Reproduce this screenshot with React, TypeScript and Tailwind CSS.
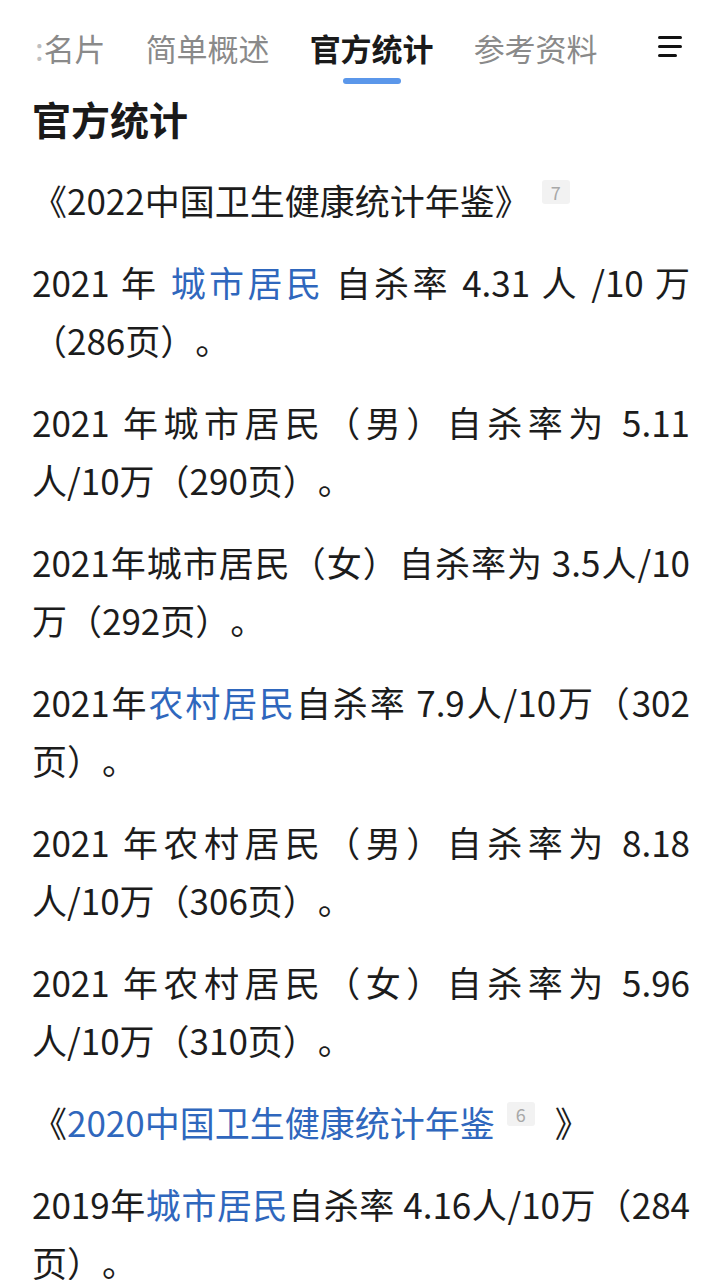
import { useState } from 'react';

const tabs = ['名片', '简单概述', '官方统计', '参考资料'];

function Link({ children }: { children: React.ReactNode }) {
  return <span className="text-[#2f67bd]">{children}</span>;
}

function Ref({ n }: { n: string }) {
  return (
    <sup className="ml-3 inline-flex h-[24px] w-[28px] items-center justify-center rounded-[3px] bg-[#f2f2f2] align-[6px] text-[18px] leading-none text-[#a8a8a8]">
      {n}
    </sup>
  );
}

// keeps a unit like "人/10万" from splitting where the reference does not
function Nw({ children }: { children: React.ReactNode }) {
  return <span className="whitespace-nowrap">{children}</span>;
}

export default function App() {
  const [active, setActive] = useState('官方统计');

  return (
    <div
      className="min-h-[1280px] w-[720px] overflow-hidden bg-white text-[#1c1c1c]"
      style={{ fontFamily: '"Noto Sans CJK SC", "Noto Sans", sans-serif' }}
    >
      {/* Tabs */}
      <div className="relative flex h-[89px] items-start">
        <div className="flex flex-1 items-start gap-[40px] overflow-hidden pl-[47px] pt-[28px]">
          {tabs.map((t, i) => (
            <button
              key={t}
              onClick={() => setActive(t)}
              className={`relative flex shrink-0 flex-col items-center text-[31px] leading-[40px] ${
                active === t ? 'font-bold text-[#1a1a1a]' : 'text-[#8a8a8a]'
              } ${i === 0 ? '-ml-[12px]' : ''}`}
            >
              {i === 0 ? (
                <span className="relative">
                  <span className="text-[#b5b5b5]">:</span>
                  {t}
                </span>
              ) : (
                t
              )}
              {active === t && <span className="mt-[10px] h-[6px] w-[58px] rounded-full bg-[#5b97ea]" />}
            </button>
          ))}
        </div>
        <button className="mr-[38px] mt-[36px] flex w-[24px] flex-col gap-[6px]">
          <span className="h-[3px] w-[24px] rounded-full bg-[#111]" />
          <span className="h-[3px] w-[24px] rounded-full bg-[#111]" />
          <span className="h-[3px] w-[19px] rounded-full bg-[#111]" />
        </button>
        <div className="pointer-events-none absolute left-0 top-0 h-[80px] w-[44px] bg-gradient-to-r from-white via-white/60 to-transparent" />
      </div>

      {/* Content */}
      <div className="pl-[32px] pr-[30px] text-[35px] leading-[58px] [text-spacing-trim:space-all]">
        <h2 className="text-[39px] font-bold leading-[58px] text-[#1a1a1a]">官方统计</h2>

        <p className="mt-[24px]">
          《2022中国卫生健康统计年鉴》
          <Ref n="7" />
        </p>

        <p className="mt-[24px] text-justify">
          2021 年 <Link>城市居民</Link> 自杀率 4.31 人 /10 万（286页）。
        </p>
        <p className="mt-[24px] text-justify">
          2021 年城市居民（男）自杀率为 5.11 <Nw>人/10万</Nw>（290页）。
        </p>
        <p className="mt-[24px] text-justify">
          2021年城市居民（女）自杀率为 3.5<Nw>人/10</Nw>万（292页）。
        </p>
        <p className="mt-[24px] text-justify">
          2021年<Link>农村居民</Link>自杀率 7.9人/10万（302页）。
        </p>
        <p className="mt-[24px] text-justify">
          2021 年农村居民（男）自杀率为 8.18 <Nw>人/10万</Nw>（306页）。
        </p>
        <p className="mt-[24px] text-justify">
          2021 年农村居民（女）自杀率为 5.96 <Nw>人/10万</Nw>（310页）。
        </p>

        <p className="mt-[24px]">
          《<Link>2020中国卫生健康统计年鉴</Link>
          <Ref n="6" />
          <span className="ml-5">》</span>
        </p>

        <p className="mt-[24px] text-justify">
          2019年<Link>城市居民</Link>自杀率 4.16人/10万（284页）。
        </p>
      </div>
    </div>
  );
}
